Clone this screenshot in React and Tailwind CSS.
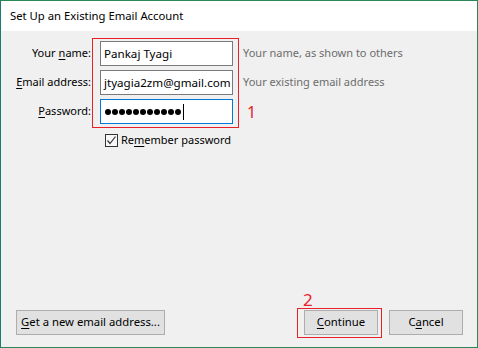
import React from 'react';

const font = { fontFamily: '"Segoe UI", "Noto Sans", sans-serif' };

// underlined access-key letter
const U = ({ children }) => <span className="underline underline-offset-[2px]">{children}</span>;

const Field = ({ children, focused }) => (
  <div className={`h-[25px] w-[133px] bg-white border flex items-center px-[3px] text-[11.6px] text-black ${focused ? 'border-[#0078d7]' : 'border-[#7a7a7a]'}`}>
    {children}
  </div>
);

const Button = ({ children, className = '' }) => (
  <button type="button" className={`h-[25px] bg-[#e1e1e1] border border-[#adadad] text-[11.3px] text-black flex items-center justify-center ${className}`}>
    {children}
  </button>
);

export default function App() {
  return (
    <div className="w-[478px] h-[348px] border border-[#2b8658] border-l-[#1f7a72] flex flex-col" style={font}>
      {/* Title bar */}
      <div className="h-[30px] bg-white flex items-center pl-[9px] text-[11.3px] text-black">
        Set Up an Existing Email Account
      </div>

      {/* Body */}
      <div className="flex-1 bg-[#f0f0f0] flex flex-col justify-between pt-[7px] pb-[9px]">
        <div>
          <div className="flex">
            {/* Labels */}
            <div className="w-[91px] flex flex-col gap-[4px] pt-[3px] pr-[1px] text-[11px] text-black">
              <div className="h-[25px] flex items-center justify-end">Your <span className="ml-[3px]"><U>n</U>ame:</span></div>
              <div className="h-[25px] flex items-center justify-end"><U>E</U>mail address:</div>
              <div className="h-[25px] flex items-center justify-end"><U>P</U>assword:</div>
            </div>

            {/* Red annotation box */}
            <div className="border border-[#e8202a] pt-[2px] pb-[3px] pl-[7px] pr-[5px] flex flex-col gap-[4px]">
              <Field>Pankaj Tyagi</Field>
              <Field>jtyagia2zm@gmail.com</Field>
              <Field focused>
                <div className="flex items-center gap-[1px] pl-[1px]">
                  {Array.from({ length: 11 }).map((_, i) => (
                    <span key={i} className="w-[6px] h-[6px] rounded-full bg-black" />
                  ))}
                  <span className="w-[1px] h-[16px] bg-black ml-[1px]" />
                </div>
              </Field>
            </div>

            {/* Hints */}
            <div className="flex flex-col gap-[4px] pt-[3px] pl-[4px] text-[11px] text-[#6d6d6d]">
              <div className="h-[25px] flex items-center">Your name, as shown to others</div>
              <div className="h-[25px] flex items-center">Your existing email address</div>
              <div className="h-[25px] flex items-center pl-[4px] text-[16px] text-[#e8202a]">1</div>
            </div>
          </div>

          {/* Remember password */}
          <div className="flex items-center gap-[3px] pl-[104px] mt-[4px] text-[11px] text-black">
            <span className="w-[13px] h-[13px] border border-[#333333] bg-[#f8f8f8] flex items-center justify-center">
              <svg width="11" height="11" viewBox="0 0 11 11">
                <polyline points="1.5,5.5 4,8.5 9.5,1.5" fill="none" stroke="#333333" strokeWidth="1.2" />
              </svg>
            </span>
            <span>Re<U>m</U>ember password</span>
          </div>
        </div>

        {/* Buttons */}
        <div className="flex items-end pl-[15px] pr-[14px]">
          <div className="mb-[3px]">
            <Button className="w-[149px]"><span><U>G</U>et a new email address...</span></Button>
          </div>
          <div className="flex-1" />
          <div className="flex flex-col">
            <div className="pl-[6px] text-[17px] leading-[17px] text-[#e8202a]">2</div>
            <div className="border border-[#e8202a] pl-[6px] pr-[3px] pt-[1px] pb-[2px]">
              <Button className="w-[74px]"><span><U>C</U>ontinue</span></Button>
            </div>
          </div>
          <div className="mb-[3px] ml-[7px]">
            <Button className="w-[74px]"><span>C<U>a</U>ncel</span></Button>
          </div>
        </div>
      </div>
    </div>
  );
}
